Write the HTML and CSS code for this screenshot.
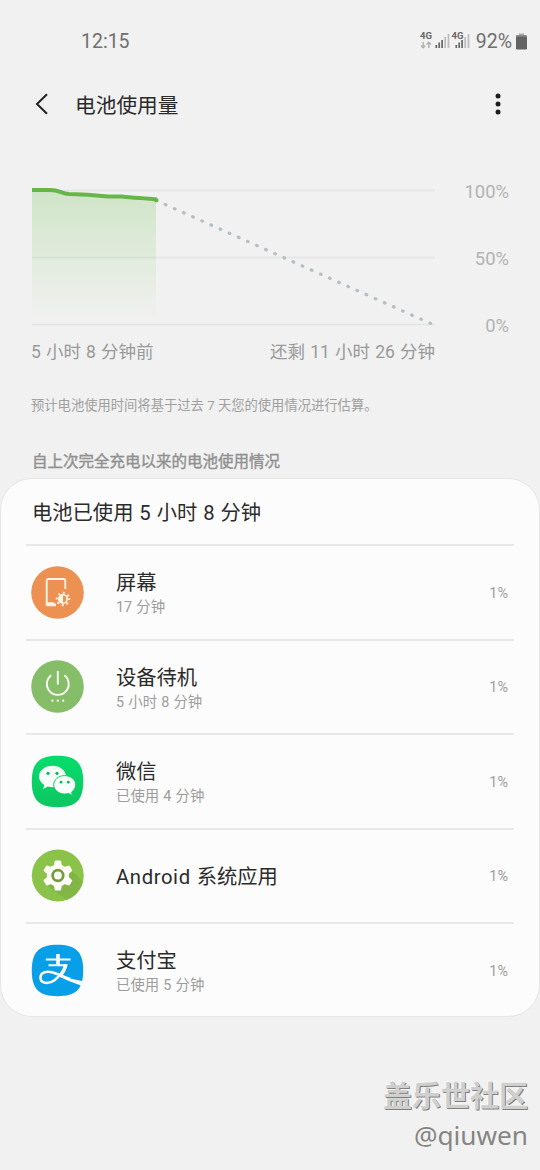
FILE: index.html
```html
<!DOCTYPE html>
<html lang="zh-CN">
<head>
<meta charset="utf-8">
<title>电池使用量</title>
<link rel="stylesheet" href="styles.css">
</head>
<body>
<div class="screen">
  <header class="status">
    <span class="clock">12:15</span>
    <div class="indicators">
      <svg class="signals" width="52" height="20" viewBox="0 0 52 20">
        <text class="net" x="0" y="8">4G</text>
        <path d="M3.2 11v5.5M1 14.5l2.2 2.2 2.2-2.2M8.8 17v-5.5M6.600 13.500l2.200-2.200 2.200 2.200" fill="none" stroke="#b0b0b0" stroke-width="1.4"/>
        <path d="M16.300 17v-3M19.200 17v-5.500M22.100 17v-8" stroke="#666" stroke-width="1.700"/>
        <path d="M25.200 17v-11M28.500 17v-14" stroke="#bbb" stroke-width="1.700"/>
        <text class="net" x="31.500" y="8">4G</text>
        <path d="M36.300 17v-3M39.200 17v-5.500M42.100 17v-8" stroke="#666" stroke-width="1.700"/>
        <path d="M45.200 17v-11M48.500 17v-14" stroke="#bbb" stroke-width="1.700"/>
      </svg>
      <span class="percent">92%</span>
      <svg width="11" height="17" viewBox="0 0 11 17"><path d="M3 0.500h5v2h-5z" fill="#aaa"/><rect y="2.300" width="11" height="14.200" rx="1.200" fill="#636363"/><path d="M0 3h11" stroke="#999"/></svg>
    </div>
  </header>

  <nav class="bar">
    <svg class="back" width="14" height="22" viewBox="0 0 14 22"><path d="M12 1.300L2 11l10 9.700" fill="none" stroke="#222" stroke-width="2"/></svg>
    <h1>电池使用量</h1>
    <svg class="more" width="6" height="22" viewBox="0 0 6 22" fill="#1f1f1f"><circle cx="3" cy="3" r="2.500"/><circle cx="3" cy="11" r="2.500"/><circle cx="3" cy="19" r="2.500"/></svg>
  </nav>

  <section class="chart">
    <div class="plot">
      <svg width="408" height="160" viewBox="0 0 408 160">
        <defs><linearGradient id="fill" x1="0" y1="0" x2="0" y2="1"><stop offset="0" stop-color="#6bc04b" stop-opacity=".25"/><stop offset=".4" stop-color="#6bc04b" stop-opacity=".15"/><stop offset="1" stop-color="#6bc04b" stop-opacity="0"/></linearGradient></defs>
        <path d="M0 20.500h403M0 87.500h403M0 154.500h403" stroke="#e3e4e4" stroke-width="1.300"/>
        <path d="M0 20H20C28 20 30 23.500 37 24C50 24.500 62 25 76 26.500H90C102 28 112 28 124 29.500V152H0z" fill="url(#fill)"/>
        <path d="M0 20H18C28 20 29 23.500 37 23.900C50 24.200 62 25 76 26.400H90C102 28 112 28 124 29.500L124.500 30.500" fill="none" stroke="#67b648" stroke-width="4" stroke-linejoin="round"/>
        <circle cx="124.400" cy="30.400" r="2" fill="#67b648"/>
        <path d="M133.300 34.500L398.700 153.500" stroke="#b4bfc3" stroke-width="3.200" stroke-linecap="round" stroke-dasharray="0.700 9.300"/>
      </svg>
      <div class="span"><span>5 小时 8 分钟前</span><span>还剩 11 小时 26 分钟</span></div>
    </div>
    <div class="scale"><span>100%</span><span>50%</span><span>0%</span></div>
  </section>
  <p class="note">预计电池使用时间将基于过去 7 天您的使用情况进行估算。</p>
  <h2 class="caption">自上次完全充电以来的电池使用情况</h2>

  <main class="card">
    <h3>电池已使用 5 小时 8 分钟</h3>
    <div class="row">
      <svg class="icon" viewBox="0 0 53 53"><circle cx="26.500" cy="26.500" r="26.300" fill="#ed9153"/>
        <path d="M34.300 23V14.500Q34.300 13 32.800 13H17.200Q15.700 13 15.700 14.500V38.500H25" fill="none" stroke="#fff3e6" stroke-width="1.900"/><path d="M15 36.200h7.500l2.700 4H16.500q-1.500 0-1.500-1.500z" fill="#fff3e6"/>
        <circle cx="32" cy="33" r="6" fill="none" stroke="#fff3e6" stroke-width="2.500" stroke-dasharray="1.800 2.912" transform="rotate(-8 32 33)"/>
        <circle cx="32" cy="33" r="4.200" fill="none" stroke="#fff3e6" stroke-width="1.600"/><path d="M32 29a4 4 0 0 0 0 8z" fill="#fff3e6"/></svg>
      <div class="label"><b>屏幕</b><small>17 分钟</small></div><span class="usage">1%</span>
    </div>
    <div class="row">
      <svg class="icon" viewBox="0 0 53 53"><circle cx="26.500" cy="26.500" r="26.300" fill="#86bd69"/>
        <path d="M20.200 15.300A10.900 10.900 0 1 0 33.400 15.300M26.800 11V24.500" fill="none" stroke="#fafff5" stroke-width="1.900"/>
        <g fill="#fafff5"><circle cx="21.400" cy="40.700" r="1.1"/><circle cx="26.800" cy="40.700" r="1.1"/><circle cx="32.200" cy="40.700" r="1.1"/></g></svg>
      <div class="label"><b>设备待机</b><small>5 小时 8 分钟</small></div><span class="usage">1%</span>
    </div>
    <div class="row">
      <svg class="icon" viewBox="0 0 53 53"><defs><linearGradient id="wx" x1="0" y1="0" x2="0" y2="1"><stop stop-color="#05dc6b"/><stop offset="1" stop-color="#0dc661"/></linearGradient></defs>
        <path d="M26.500 .8C45 .8 52.200 8 52.200 26.500S45 52.200 26.500 52.200 .8 45 .8 26.500 8 .8 26.500 .8z" fill="url(#wx)"/>
        <path d="M21.500 10.800C13.900 10.800 8 15.600 8 21.600c0 3.600 2.100 6.500 5.300 8.400l-1.200 4 4.700-2.400c1.400.4 3 .6 4.700.6 7.500 0 13.500-4.700 13.500-10.600s-6-10.800-13.500-10.800z" fill="#f8fffa"/>
        <path d="M33.700 20.600c-6.100 0-11 4.100-11 9.200S27.600 39 33.700 39c1.300 0 2.600-.2 3.800-.6l4 2-.9-3.300c2.600-1.800 4.100-4.400 4.100-7.300 0-5.100-4.900-9.200-11-9.200z" fill="#f8fffa" stroke="#10cb66" stroke-width="1"/>
        <g fill="#08b958"><circle cx="17" cy="18.300" r="1.600"/><circle cx="26" cy="18.300" r="1.600"/><circle cx="30" cy="27.200" r="1.400"/><circle cx="37.300" cy="27.200" r="1.400"/></g></svg>
      <div class="label"><b>微信</b><small>已使用 4 分钟</small></div><span class="usage">1%</span>
    </div>
    <div class="row">
      <svg class="icon" viewBox="0 0 53 53"><defs><clipPath id="disc"><circle cx="26.800" cy="26.500" r="26"/></clipPath><linearGradient id="shade" x1="0" y1="0" x2="1" y2="1"><stop stop-color="#78aa40"/><stop offset="1" stop-color="#86ba4a"/></linearGradient></defs>
        <circle cx="26.800" cy="26.500" r="26" fill="#8bc34a"/><path d="M41 22L62 43 50 62 17 37z" fill="url(#shade)" opacity=".75" clip-path="url(#disc)"/>
        <g transform="translate(26.900 26.500)" fill="#fffef8"><circle r="11"/><path id="tooth" d="M-4.200-9L-3.100-14.500Q-3-15-2.400-15H2.400Q3-15 3.100-14.500L4.200-9z"/><use href="#tooth" transform="rotate(60)"/><use href="#tooth" transform="rotate(120)"/><use href="#tooth" transform="rotate(180)"/><use href="#tooth" transform="rotate(240)"/><use href="#tooth" transform="rotate(300)"/><circle r="5.300" fill="none" stroke="#719d40" stroke-width="2.800"/></g></svg>
      <div class="label"><b><span class="latin">Android</span> 系统应用</b></div><span class="usage">1%</span>
    </div>
    <div class="row">
      <svg class="icon" viewBox="0 0 53 53"><path d="M26.500 .8C45 .8 52.200 8 52.200 26.500S45 52.200 26.500 52.200 .8 45 .8 26.500 8 .8 26.500 .8z" fill="#079fe8"/>
        <path d="M14.800 15.500H39.500M17.500 21.200H36" stroke="#fff" stroke-width="2"/><path d="M27 10v11" stroke="#fff" stroke-width="3.600"/>
        <path d="M34.500 20.500C33 27 28 32.500 23.500 36.200C18 40.300 9.400 40 9.400 33.500C9.400 28.500 15.500 26.800 21 28.200C27 29.700 32 33 39 35" fill="none" stroke="#fff" stroke-width="2.500"/>
        <path d="M32.800 20.500h4C35.500 25.500 33.600 28.900 31.300 31.700Q41 35.500 52.100 37.300Q51.400 40 50.600 41.800Q38 37.500 28.500 32.700C31 29 32.300 25 32.800 20.500z" fill="#fff"/></svg>
      <div class="label"><b>支付宝</b><small>已使用 5 分钟</small></div><span class="usage">1%</span>
    </div>
  </main>
  <footer class="credit"><span class="site">盖乐世社区</span><span class="user">@qiuwen</span></footer>
</div>
</body>
</html>
```
FILE: styles.css
```css
* { box-sizing: border-box; }
body { margin: 0; background: #f1f1f1; font-family: Roboto, "Noto Sans CJK SC", sans-serif; }
h1, h2, h3, p { margin: 0; font-weight: 400; }
svg { display: block; flex: none; }
.screen { display: flex; flex-direction: column; width: 540px; height: 1170px; overflow: hidden; white-space: nowrap; }

.status { display: flex; justify-content: space-between; align-items: center; height: 82px; padding: 0 13px 0 81px; color: #707070; font-size: 19.5px; }
.indicators { display: flex; align-items: center; }
.net { font: 700 9.5px Roboto, sans-serif; fill: #666; }
.percent { margin: 0 4px 0 4px; }

.bar { display: flex; align-items: center; height: 44px; padding: 0 39px 0 35px; }
.bar h1 { flex: 1; margin-left: 26px; padding-top: 3px; font-size: 20.7px; line-height: 30px; color: #2b2b2b; }

.chart { display: flex; justify-content: space-between; height: 238px; padding: 44px 31px 0 32px; }
.plot { width: 403px; }
.plot svg { overflow: visible; }
.span { display: flex; justify-content: space-between; margin: 9px 0 0 -1px; font-size: 17.5px; line-height: 26px; color: #999; word-spacing: .8px; }
.scale { display: flex; flex-direction: column; gap: 41px; padding-top: 9px; text-align: right; font-size: 18.4px; line-height: 26px; color: #b3b3b3; }
.note { height: 82px; padding: 32px 0 0 31px; font-size: 13.3px; line-height: 20px; color: #a0a0a0; }
.caption { height: 32px; padding: 5px 0 0 32px; font-size: 15.5px; line-height: 22px; color: #909090; -webkit-text-stroke: .4px #909090; }

.card { height: 539px; border: 1px solid #e6e6e6; border-radius: 32px; background: #fcfcfc; padding: 0 25px; }
.card h3 { height: 65.4px; padding: 19px 0 0 6px; font-size: 20.3px; line-height: 30px; color: #2b2b2b; word-spacing: .9px; }
.row { display: flex; align-items: center; height: 94.5px; border-top: 2px solid #e8e8e8; padding: 0 6px 1px 5px; }
.icon { width: 53px; height: 53px; }
.label { display: flex; flex-direction: column; flex: 1; margin-left: 32px; padding-top: 3px; }
.label b { font-size: 20.3px; font-weight: 400; line-height: 28px; color: #2b2b2b; }
.latin { letter-spacing: .6px; margin-right: 1px; }
.label small { font-size: 14.4px; line-height: 21px; color: #9c9c9c; word-spacing: .6px; }
.usage { padding-top: 2px; font-size: 14.4px; color: #9c9c9c; }

.credit { display: flex; flex-direction: column; align-items: flex-end; margin-top: 61px; padding-right: 12px; }
.site { font-size: 29px; line-height: 38px; font-weight: 700; color: #cfcfcf; text-shadow: 1px 1px 0 #808080, -1px -1px 0 #faf6f0; }
.user { font: 26.2px/38px "Noto Sans", sans-serif; color: #858585; text-shadow: -1px -1px 0 #faf6f0; }
```
